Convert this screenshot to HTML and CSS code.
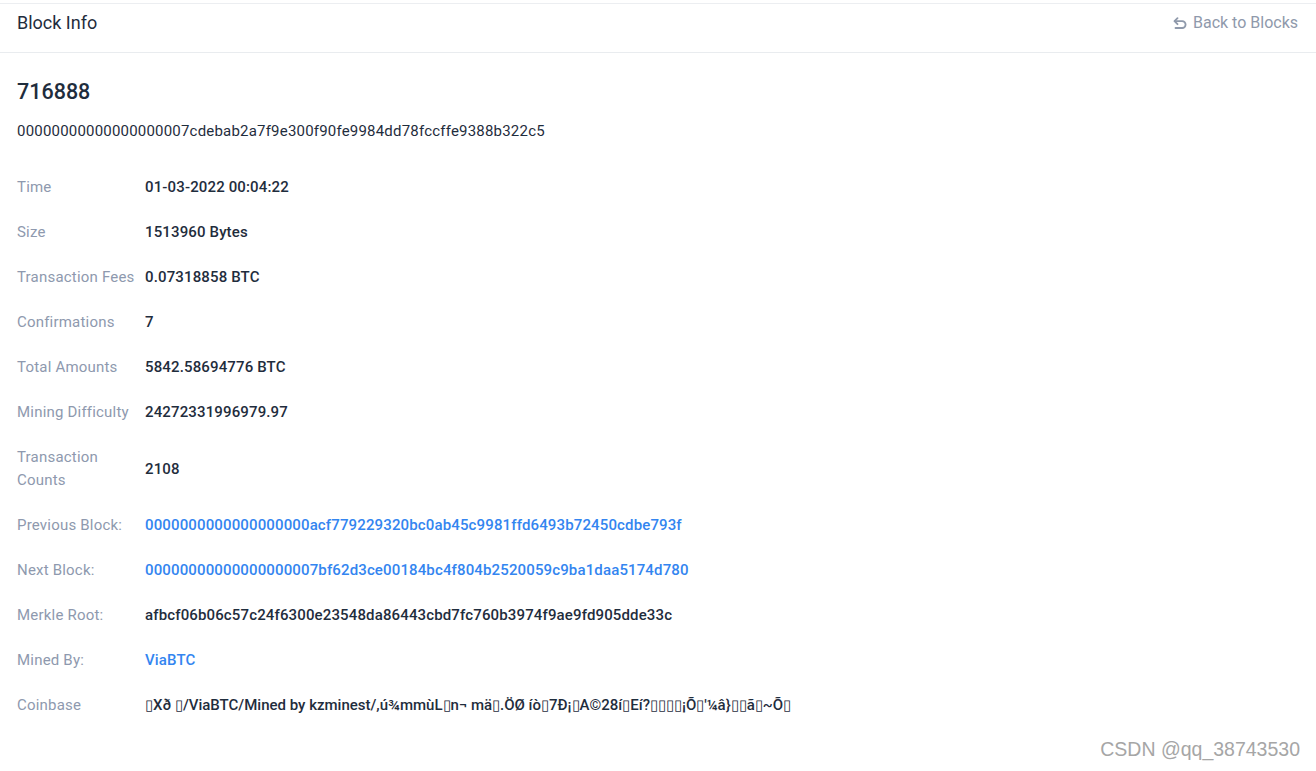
FILE: index.html
```html
<!DOCTYPE html>
<html>
<head>
<meta charset="utf-8">
<title>Block Info</title>
<link rel="stylesheet" href="styles.css">
</head>
<body>
<div class="card">
  <div class="card-header">
    <div class="card-title">Block Info</div>
    <a class="back-link" href="#">
      <svg class="back-icon" width="14" height="13" viewBox="0 0 14 13" aria-hidden="true">
        <path d="M4.5 1.2 L1.5 4.2 L4.5 7.2" fill="none" stroke="currentColor" stroke-width="1.8" stroke-linecap="round" stroke-linejoin="round"/>
        <path d="M1.8 4.2 H9.2 A3.4 3.4 0 0 1 9.2 11 H2.5" fill="none" stroke="currentColor" stroke-width="1.8" stroke-linecap="round"/>
      </svg>
      <span>Back to Blocks</span>
    </a>
  </div>
  <div class="card-body">
    <h2 class="block-height">716888</h2>
    <div class="block-hash">00000000000000000007cdebab2a7f9e300f90fe9984dd78fccffe9388b322c5</div>
    <table class="info-table">
      <tbody>
        <tr><td class="label">Time</td><td class="value">01-03-2022 00:04:22</td></tr>
        <tr><td class="label">Size</td><td class="value">1513960 Bytes</td></tr>
        <tr><td class="label">Transaction Fees</td><td class="value">0.07318858 BTC</td></tr>
        <tr><td class="label">Confirmations</td><td class="value">7</td></tr>
        <tr><td class="label">Total Amounts</td><td class="value">5842.58694776 BTC</td></tr>
        <tr><td class="label">Mining Difficulty</td><td class="value">24272331996979.97</td></tr>
        <tr><td class="label">Transaction Counts</td><td class="value">2108</td></tr>
        <tr><td class="label">Previous Block:</td><td class="value"><a class="link" href="#">0000000000000000000acf779229320bc0ab45c9981ffd6493b72450cdbe793f</a></td></tr>
        <tr><td class="label">Next Block:</td><td class="value"><a class="link" href="#">00000000000000000007bf62d3ce00184bc4f804b2520059c9ba1daa5174d780</a></td></tr>
        <tr><td class="label">Merkle Root:</td><td class="value">afbcf06b06c57c24f6300e23548da86443cbd7fc760b3974f9ae9fd905dde33c</td></tr>
        <tr><td class="label">Mined By:</td><td class="value"><a class="link" href="#">ViaBTC</a></td></tr>
        <tr><td class="label">Coinbase</td><td class="value coinbase">▯Xð ▯/ViaBTC/Mined by kzminest/,ú¾mmùL▯n¬ mä▯.ÖØ íò▯7Ð¡▯A©28í▯Eí?▯▯▯▯¡Õ▯'¼â}▯▯ã▯~Õ▯</td></tr>
      </tbody>
    </table>
  </div>
</div>
<div class="watermark">CSDN @qq_38743530</div>
</body>
</html>
```
FILE: styles.css
```css
html, body {
  margin: 0;
  padding: 0;
  background: #ffffff;
}
body {
  font-family: Roboto, "Liberation Sans", sans-serif;
  color: #1f2d3d;
  padding-top: 3px;
  min-height: 768px;
  position: relative;
}
.card {
  border-top: 1px solid #eceef1;
}
.card-header {
  display: flex;
  align-items: center;
  justify-content: space-between;
  height: 48px;
  padding: 0 18px 0 17px;
  border-bottom: 1px solid #e9ecef;
}
.card-title {
  font-size: 18px;
  color: #1f2d3d;
  margin-top: -11px;
}
.back-link {
  display: flex;
  align-items: center;
  gap: 6px;
  font-size: 16px;
  color: #8f99ab;
  text-decoration: none;
  margin-top: -11px;
}
.back-icon {
  color: #8f99ab;
  margin-top: 1px;
}
.card-body {
  padding: 26px 17px 0 17px;
}
.block-height {
  margin: 0;
  font-size: 21.5px;
  line-height: 26px;
  font-weight: 500;
  color: #1f2d3d;
}
.block-hash {
  margin-top: 16px;
  font-size: 15px;
  letter-spacing: 0.2px;
  line-height: 20px;
  color: #1f2d3d;
}
.info-table {
  margin-top: 24px;
  border-collapse: collapse;
}
.info-table td {
  padding: 11px 0;
  font-size: 15px;
  letter-spacing: 0.2px;
  line-height: 23px;
  vertical-align: middle;
}
.label {
  width: 120px;
  padding-right: 8px !important;
  color: #8e99ae;
}
.info-table td.value {
  font-weight: 500;
  letter-spacing: 0.14px;
  color: #1f2d3d;
}
.info-table td.coinbase {
  letter-spacing: 0;
}
.link {
  color: #3385f0;
  text-decoration: none;
}
.watermark {
  position: absolute;
  right: 16px;
  top: 738px;
  font-family: "Liberation Sans", Arial, sans-serif;
  font-size: 19.5px;
  color: #a6a6a6;
}
```
